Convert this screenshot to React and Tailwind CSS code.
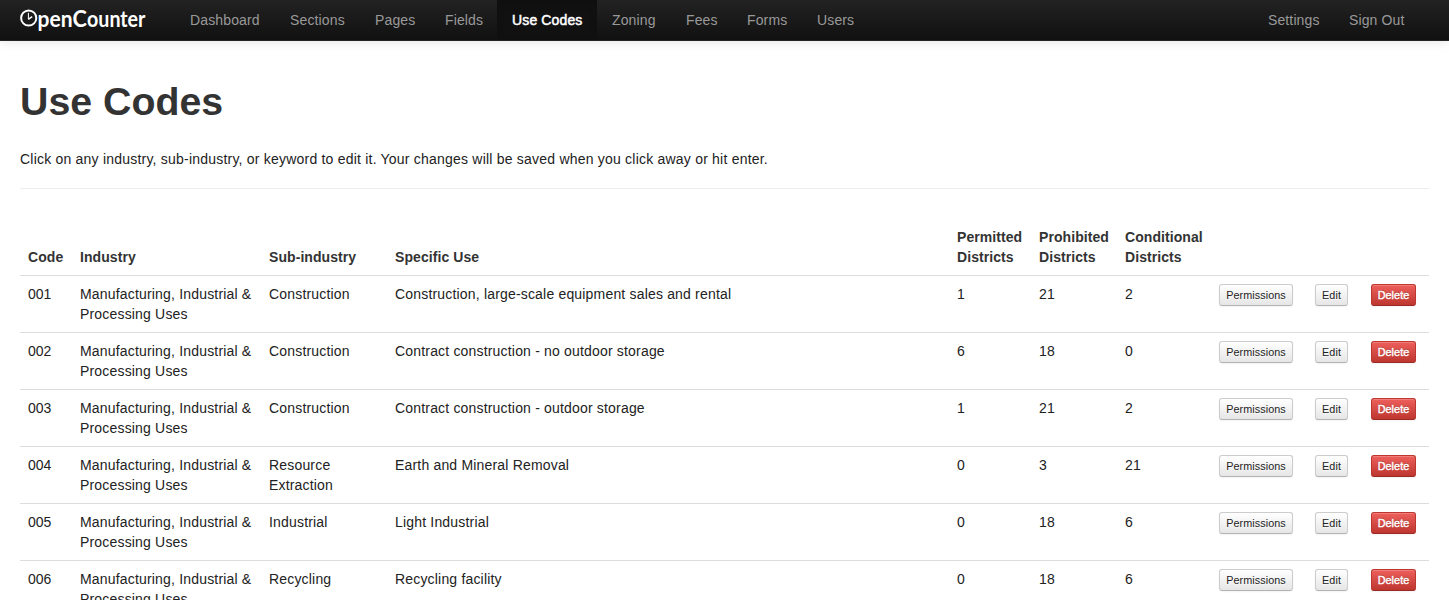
const NAV = [
  ["Dashboard", "w-[100px]"],
  ["Sections", "w-[85px]"],
  ["Pages", "w-[70px]"],
  ["Fields", "w-[67px]"],
  ["Use Codes", "w-[100px]"],
  ["Zoning", "w-[74px]"],
  ["Fees", "w-[61px]"],
  ["Forms", "w-[70px]"],
  ["Users", "w-[67px]"],
];

const MANUFACTURING = "Manufacturing, Industrial & Processing Uses";

const ROWS = [
  ["001", MANUFACTURING, "Construction", "Construction, large-scale equipment sales and rental", 1, 21, 2],
  ["002", MANUFACTURING, "Construction", "Contract construction - no outdoor storage", 6, 18, 0],
  ["003", MANUFACTURING, "Construction", "Contract construction - outdoor storage", 1, 21, 2],
  ["004", MANUFACTURING, "Resource Extraction", "Earth and Mineral Removal", 0, 3, 21],
  ["005", MANUFACTURING, "Industrial", "Light Industrial", 0, 18, 6],
  ["006", MANUFACTURING, "Recycling", "Recycling facility", 0, 18, 6],
];

const HEADERS = [
  ["Code", "w-[52px]"],
  ["Industry", "w-[189px]"],
  ["Sub-industry", "w-[126px]"],
  ["Specific Use", "w-[562px]"],
  ["Permitted Districts", "w-[82px]"],
  ["Prohibited Districts", "w-[86px]"],
  ["Conditional Districts", "w-[94px]"],
  ["", "w-[96px]"],
  ["", "w-[56px]"],
  ["", "w-[66px]"],
];

function Logo() {
  return (
    <svg width="136" height="36" viewBox="0 0 136 36" className="block" aria-label="OpenCounter">
      <circle cx="8.7" cy="14" r="7.6" fill="none" stroke="#fff" strokeWidth="2" />
      <path d="M8.4 8.8v6.2" fill="none" stroke="#fff" strokeWidth="1" />
      <path d="M8.2 15.4L12.2 12.6" fill="none" stroke="#fff" strokeWidth="1.4" />
      <text y="22.6" fill="#fff" fontFamily="Lato, sans-serif" fontWeight="700" fontSize="22.5">
        <tspan x="17.5" textLength="35" lengthAdjust="spacingAndGlyphs">pen</tspan>
        <tspan x="52.6" textLength="14.4" lengthAdjust="spacingAndGlyphs">C</tspan>
        <tspan x="67" textLength="58.4" lengthAdjust="spacingAndGlyphs">ounter</tspan>
      </text>
    </svg>
  );
}

function Button({ children, danger, className }) {
  const look = danger
    ? "border-[#bd362f] border-b-[#9b2a25] bg-linear-to-b from-[#ee5f5b] to-[#bd362f] text-white [text-shadow:0_-1px_0_rgba(0,0,0,0.25)] [-webkit-text-stroke:0.4px_white]"
    : "border-[#cccccc] border-b-[#b3b3b3] bg-linear-to-b from-white to-[#e6e6e6] text-[#222] [text-shadow:0_1px_1px_rgba(255,255,255,0.75)]";
  return (
    <button
      type="button"
      className={`block h-[22px] rounded-[3px] border text-center text-[10.8px] leading-[20px] tracking-[0.08px] whitespace-nowrap shadow-[inset_0_1px_0_rgba(255,255,255,0.2),0_1px_2px_rgba(0,0,0,0.05)] ${look} ${className}`}
    >
      {children}
    </button>
  );
}

export default function App() {
  return (
    <div className="h-[600px] overflow-hidden bg-white font-['Liberation_Sans',Arial,sans-serif] text-[14px] leading-[20px] text-[#222]">
      <nav className="flex h-[41px] border-b border-[#252525] bg-linear-to-b from-[#222] to-[#111] pl-5 pr-[29px] text-[#999] shadow-[0_1px_10px_rgba(0,0,0,0.1)]">
        <a className="w-[155px] pt-1">
          <Logo />
        </a>
        {NAV.map(([label, width]) => (
          <a
            key={label}
            className={`whitespace-nowrap py-[10px] pl-[15px] tracking-[0.14px] ${width} ${
              label === "Use Codes"
                ? "bg-[#111] text-white [-webkit-text-stroke:0.5px_white] shadow-[inset_0_3px_8px_rgba(0,0,0,0.125)]"
                : ""
            }`}
          >
            {label}
          </a>
        ))}
        <a className="ml-auto w-[81px] whitespace-nowrap py-[10px] pl-[15px] tracking-[0.12px]">Settings</a>
        <a className="w-[86px] whitespace-nowrap py-[10px] pl-[15px] tracking-[0.12px]">Sign Out</a>
      </nav>
      <main className="px-5 pt-[40px]">
        <h1 className="text-[39.3px] font-bold leading-[40px] text-[#333]">Use Codes</h1>
        <p className="mt-7 tracking-[0.213px]">
          Click on any industry, sub-industry, or keyword to edit it. Your changes will be saved when you click away or
          hit enter.
        </p>
        <hr className="mt-[19px] border-t border-[#eee]" />
        <table className="mt-[30px] w-[1409px] table-fixed border-collapse text-left tracking-[0.18px]">
          <thead className="tracking-[0.07px] text-[#333]">
            <tr>
              {HEADERS.map(([label, width], i) => (
                <th key={i} className={`p-2 align-bottom font-bold ${width}`}>
                  {label}
                </th>
              ))}
            </tr>
          </thead>
          <tbody>
            {ROWS.map(([code, industry, ...rest]) => (
              <tr key={code} className="border-t border-[#ddd] align-top">
                <td className="p-2 tracking-normal">{code}</td>
                <td className="py-2 pl-2">{industry}</td>
                {rest.map((value, i) => (
                  <td key={i} className="p-2">
                    {value}
                  </td>
                ))}
                <td className="p-2">
                  <Button className="w-[74px]">Permissions</Button>
                </td>
                <td className="p-2">
                  <Button className="w-[33px]">Edit</Button>
                </td>
                <td className="p-2">
                  <Button danger className="w-[45px]">
                    Delete
                  </Button>
                </td>
              </tr>
            ))}
          </tbody>
        </table>
      </main>
    </div>
  );
}
